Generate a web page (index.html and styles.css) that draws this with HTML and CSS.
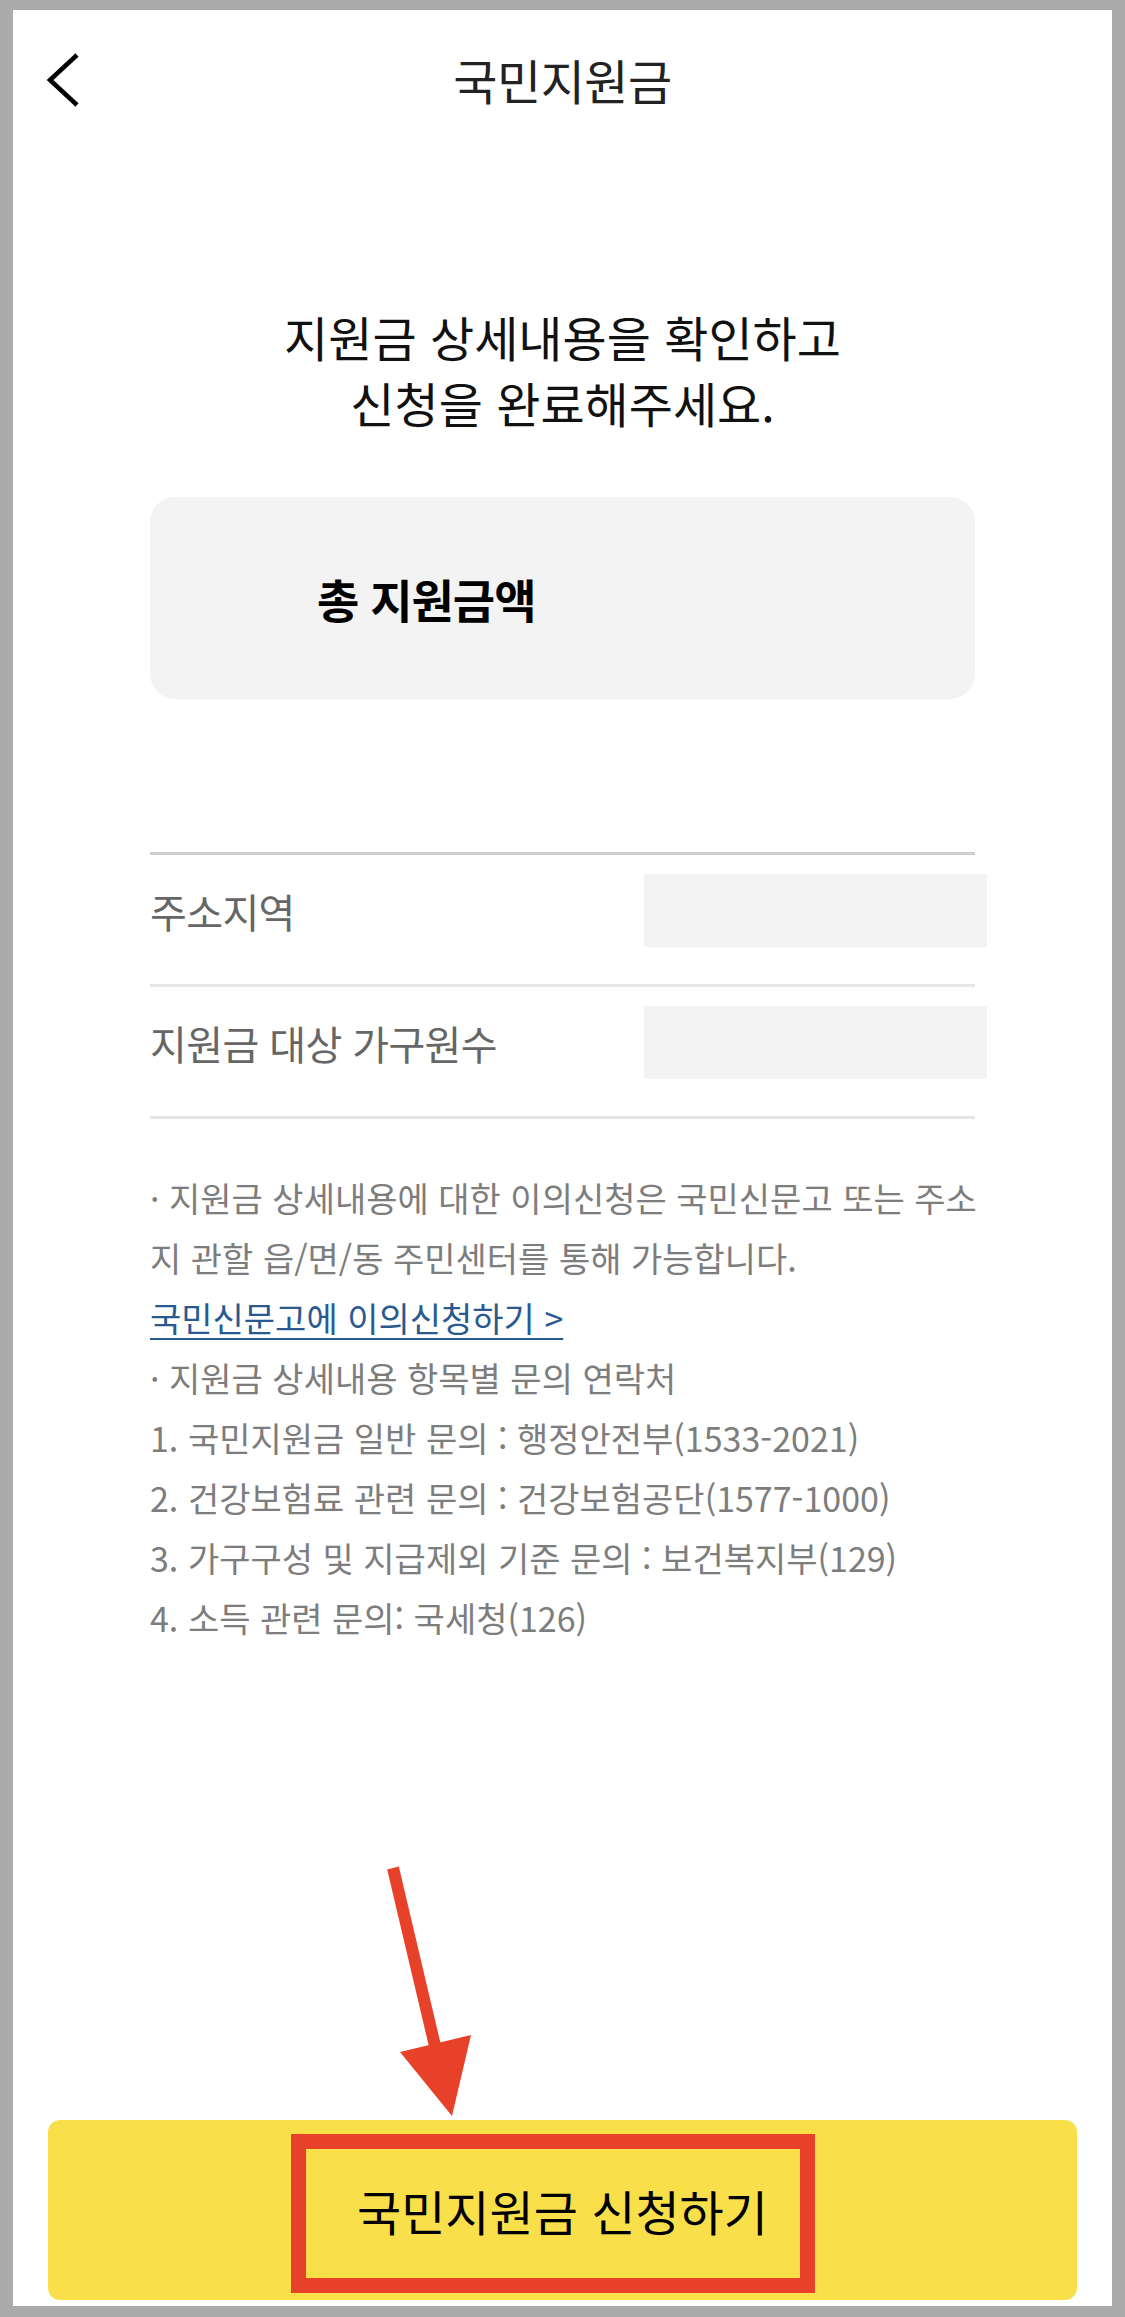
FILE: index.html
```html
<!DOCTYPE html>
<html lang="ko">
<head>
	<meta charset="utf-8" />
	<title>국민지원금</title>
	<link rel="stylesheet" href="styles.css">
</head>
<body>
<div class="screen">
	<header class="topbar">
		<button class="back" aria-label="뒤로">
			<svg width="40" height="60" viewBox="0 0 40 60"><polyline points="33,5 6,30 33,55" fill="none" stroke="#000" stroke-width="4.5"/></svg>
		</button>
		<h1 class="topbar-title">국민지원금</h1>
		<span></span>
	</header>

	<main class="content">
		<h2 class="lead">지원금 상세내용을 확인하고<br>신청을 완료해주세요.</h2>

		<section class="total-card">
			<strong>총 지원금액</strong>
		</section>

		<ul class="info-list">
			<li class="info-row">
				<span class="info-label">주소지역</span>
				<span class="info-value"></span>
			</li>
			<li class="info-row">
				<span class="info-label">지원금 대상 가구원수</span>
				<span class="info-value"></span>
			</li>
		</ul>

		<div class="notice">
			<p>· 지원금 상세내용에 대한 이의신청은 국민신문고 또는 주소<br>지 관할 읍/면/동 주민센터를 통해 가능합니다.</p>
			<a class="notice-link" href="#">국민신문고에 이의신청하기 &gt;</a>
			<p>· 지원금 상세내용 항목별 문의 연락처</p>
			<p>1. 국민지원금 일반 문의 : 행정안전부(1533-2021)</p>
			<p>2. 건강보험료 관련 문의 : 건강보험공단(1577-1000)</p>
			<p>3. 가구구성 및 지급제외 기준 문의 : 보건복지부(129)</p>
			<p>4. 소득 관련 문의: 국세청(126)</p>
		</div>
	</main>

	<footer class="apply">
		<button class="apply-btn">
			국민지원금 신청하기
			<span class="mark"></span>
		</button>
	</footer>

	<!-- annotation arrow -->
	<svg class="pointer" width="100" height="270" viewBox="0 0 100 270">
		<line x1="10" y1="8" x2="52" y2="186" stroke="#e8412a" stroke-width="12"/>
		<polygon points="17,192 88,175 69,256" fill="#e8412a"/>
	</svg>
</div>
</body>
</html>
```

FILE: styles.css
```css
body{
	margin: 0;
	background: #ababab;
	font-family: "Noto Sans CJK KR", "Noto Sans", sans-serif;
}

.screen{
	position: relative;
	display: flex;
	flex-direction: column;
	margin: 10px 13px 11px 13px;
	height: 2296px;
	background: #fff;
}

.topbar{
	display: grid;
	grid-template-columns: 1fr auto 1fr;
	align-items: center;
	height: 140px;
}
.back{
	justify-self: start;
	margin-left: 31px;
	padding: 0;
	border: 0;
	background: none;
	line-height: 0;
}
.topbar-title{
	margin: 0;
	font-size: 48px;
	font-weight: 400;
	line-height: 1.2;
	color: #222;
	letter-spacing: -0.5px;
}

.content{
	padding: 0 137px;
}
.lead{
	margin: 153px 0 0 0;
	font-size: 48px;
	font-weight: 400;
	line-height: 66px;
	text-align: center;
	color: #111;
}

.total-card{
	display: flex;
	align-items: center;
	height: 202px;
	margin-top: 62px;
	padding-left: 167px;
	border-radius: 25px;
	background: #f3f3f3;
	font-size: 46px;
	color: #000;
}
.total-card strong{
	font-weight: 700;
	letter-spacing: -1px;
}

.info-list{
	list-style: none;
	margin: 153px 0 0 0;
	padding: 0;
	border-top: 3px solid #cfcfcf;
}
.info-row{
	display: flex;
	align-items: center;
	justify-content: space-between;
	padding: 19px 0 37px 0;
	border-bottom: 3px solid #e6e6e6;
}
.info-label{
	font-size: 40px;
	color: #666;
	letter-spacing: -0.6px;
}
.info-value{
	width: 343px;
	height: 73px;
	margin-right: -12px;
	background: #f3f3f3;
}

.notice{
	margin-top: 49px;
	font-size: 34px;
	line-height: 60px;
	color: #7d7d7d;
}
.notice p{
	margin: 0;
	white-space: nowrap;
}
.notice-link{
	color: #285a8f;
	text-decoration: underline;
	text-decoration-thickness: 2px;
	text-underline-offset: 6px;
}

.apply{
	margin-top: auto;
	padding: 0 35px 6px 35px;
}
.apply-btn{
	position: relative;
	display: flex;
	align-items: center;
	justify-content: center;
	width: 100%;
	height: 180px;
	border: 0;
	border-radius: 12px;
	background: #f9e04b;
	font-family: inherit;
	font-size: 48px;
	color: #000;
}
.mark{
	position: absolute;
	left: 243px;
	top: 14px;
	width: 524px;
	height: 159px;
	box-sizing: border-box;
	border: 15px solid #e8412a;
}

.pointer{
	position: absolute;
	left: 370px;
	top: 1850px;
}
```
